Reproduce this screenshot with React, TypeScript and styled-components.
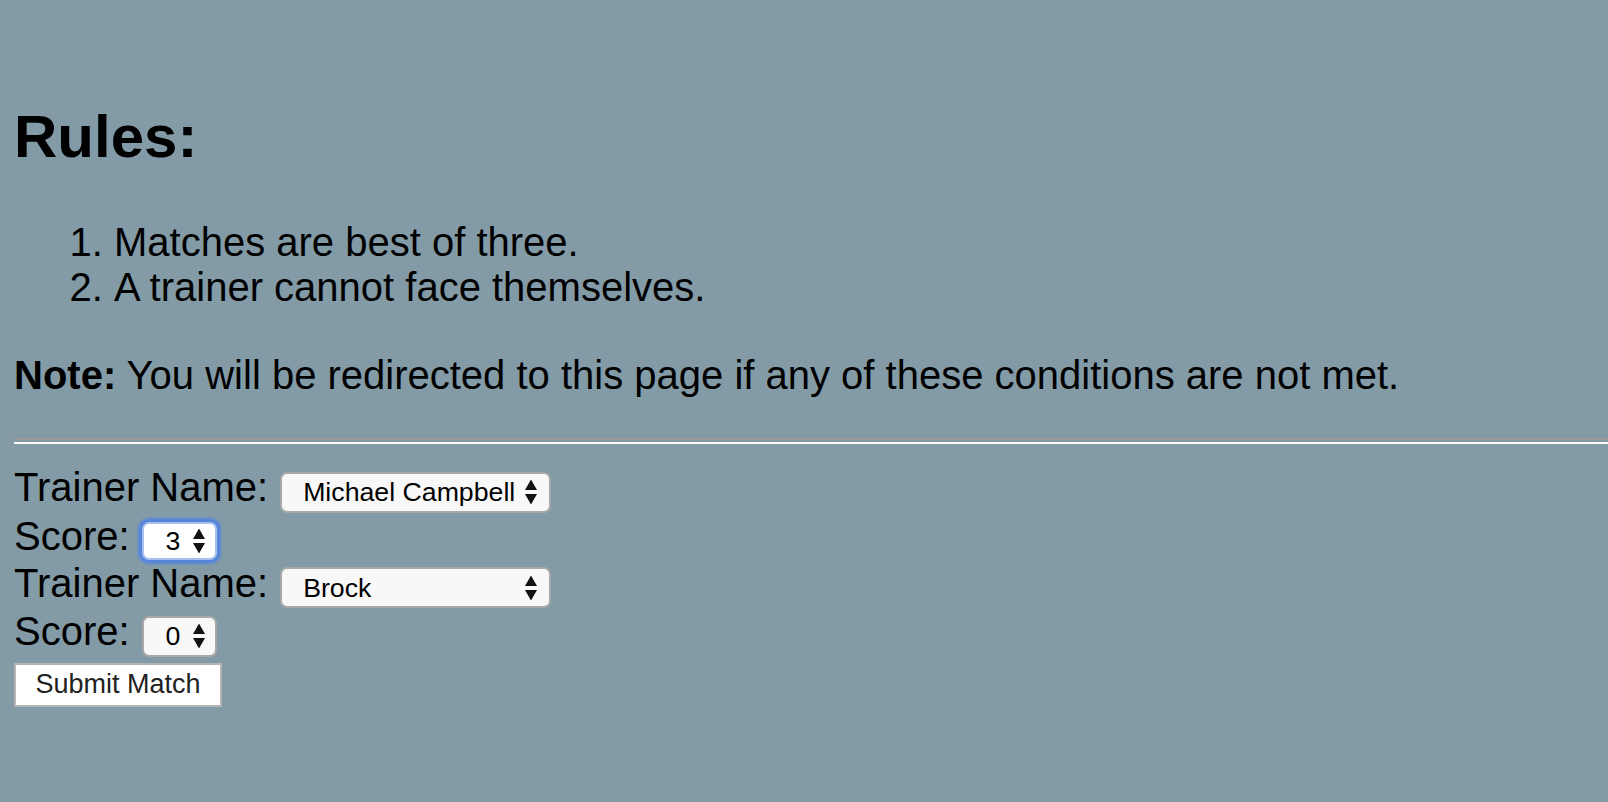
import React from 'react'
import styled, { createGlobalStyle, css } from 'styled-components'

const GlobalStyle = createGlobalStyle`
  html, body {
    margin: 0;
    background: #839ba6;
  }
  body {
    font-family: 'Liberation Sans', Arial, Helvetica, sans-serif;
    font-size: 40px;
    color: #000;
    overflow: hidden;
  }
`

const trainers = ['Michael Campbell', 'Brock', 'Misty']
const scores = ['0', '1', '2', '3']

interface ChoiceProps {
  options: string[]
  value: string
  narrow?: boolean
  focused?: boolean
}

function Choice({ options, value, narrow, focused }: ChoiceProps) {
  return (
    <SelectWrap>
      <Select defaultValue={value} $narrow={narrow} $focused={focused}>
        {options.map((opt) => (
          <option key={opt} value={opt}>
            {opt}
          </option>
        ))}
      </Select>
      <Arrows $narrow={narrow} width="12" height="25" viewBox="0 0 12 25">
        <polygon points="0,10.5 6,0 12,10.5" fill="#111" />
        <polygon points="0,14.5 12,14.5 6,25" fill="#111" />
      </Arrows>
    </SelectWrap>
  )
}

export default function App() {
  return (
    <Page>
      <GlobalStyle />
      <Title>Rules:</Title>
      <RuleList>
        <li>Matches are best of three.</li>
        <li>A trainer cannot face themselves.</li>
      </RuleList>
      <Note>
        <strong>Note:</strong> You will be redirected to this page if any of these conditions are
        not met.
      </Note>
      <Divider />
      <MatchForm onSubmit={(e) => e.preventDefault()}>
        <FieldRow>
          <Label>Trainer Name:</Label>
          <Choice options={trainers} value="Michael Campbell" />
        </FieldRow>
        <FieldRow>
          <Label>Score:</Label>
          <Choice options={scores} value="3" narrow focused />
        </FieldRow>
        <FieldRow>
          <Label>Trainer Name:</Label>
          <Choice options={trainers} value="Brock" />
        </FieldRow>
        <FieldRow>
          <Label>Score:</Label>
          <Choice options={scores} value="0" narrow />
        </FieldRow>
        <SubmitButton type="submit">Submit Match</SubmitButton>
      </MatchForm>
    </Page>
  )
}

const Page = styled.div`
  padding: 102px 0 0 14px;
`

const Title = styled.h1`
  font-size: 60px;
  font-weight: bold;
  line-height: normal;
  margin: 0 0 49px;
`

const RuleList = styled.ol`
  margin: 0 0 43px;
  padding-left: 100px;
  line-height: normal;
`

const Note = styled.p`
  margin: 0 0 40px;
  line-height: normal;
`

const Divider = styled.hr`
  margin: 0 0 20px;
  height: 2px;
  border: none;
  border-top: 2px solid #9a9a9a;
  border-bottom: 2px solid #fff;
`

const MatchForm = styled.form`
  display: flex;
  flex-direction: column;
  align-items: flex-start;
`

const FieldRow = styled.div`
  display: flex;
  align-items: baseline;
  line-height: 46px;
`

const Label = styled.span`
  white-space: nowrap;
`

const SelectWrap = styled.span`
  position: relative;
  display: inline-flex;
  margin-left: 12px;
`

const Select = styled.select<{ $narrow?: boolean; $focused?: boolean }>`
  appearance: none;
  -webkit-appearance: none;
  box-sizing: border-box;
  width: ${(p) => (p.$narrow ? '75px' : '271px')};
  height: ${(p) => (p.$narrow && p.$focused ? '38px' : '41px')};
  padding: 0 0 0 ${(p) => (p.$narrow ? '22px' : '21px')};
  font-family: 'Liberation Sans', Arial, Helvetica, sans-serif;
  font-size: 26.7px;
  color: #000;
  background: #f8f8f8;
  border: 2px solid #a8a8a8;
  border-radius: 7px;
  outline: none;
  ${(p) =>
    p.$focused &&
    css`
      background: #fff;
      border-color: #a9c0ee;
      box-shadow: 0 0 0 3px #5686dc, 0 0 0 5px rgba(86, 134, 220, 0.45);
    `}
`

const Arrows = styled.svg<{ $narrow?: boolean }>`
  position: absolute;
  right: ${(p) => (p.$narrow ? '12px' : '14px')};
  top: 50%;
  transform: translateY(-50%);
  pointer-events: none;
`

const SubmitButton = styled.button`
  box-sizing: border-box;
  margin-top: 6px;
  width: 208px;
  height: 44px;
  padding: 0;
  background: #fff;
  border: 2px solid #b4b4b4;
  border-radius: 0;
  font-family: 'Liberation Sans', Arial, Helvetica, sans-serif;
  font-size: 27px;
  color: #222;
  cursor: pointer;
`
